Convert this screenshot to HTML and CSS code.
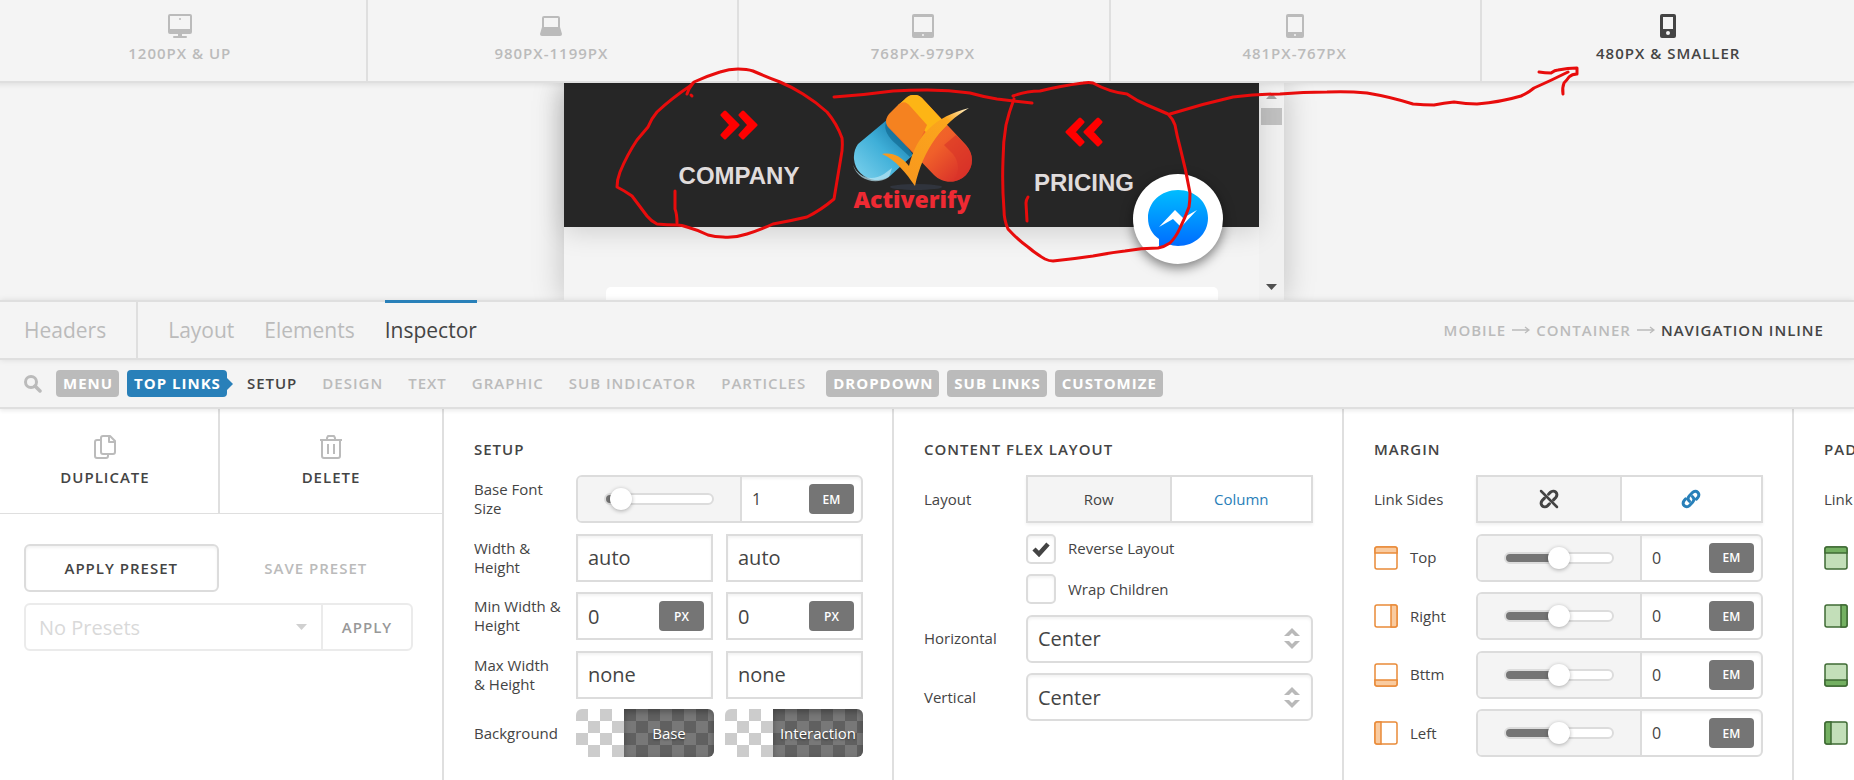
FILE: index.html
```html
<!DOCTYPE html>
<html lang="en">
<head>
    <meta charset="utf-8">
    <title>Design Editor - Navigation Inline</title>
    <link rel="stylesheet" href="styles.css">
</head>
<body>
    <!-- shared icons -->
    <svg class="defs" width="0" height="0" aria-hidden="true">
        <symbol id="side-top" viewBox="0 0 24 24">
            <rect class="box" x="1" y="1" width="22" height="22" rx="2"/>
            <path class="band" d="M1 7V3a2 2 0 0 1 2-2h18a2 2 0 0 1 2 2v4z"/>
        </symbol>
        <symbol id="side-right" viewBox="0 0 24 24">
            <rect class="box" x="1" y="1" width="22" height="22" rx="2"/>
            <path class="band" d="M17 1h4a2 2 0 0 1 2 2v18a2 2 0 0 1-2 2h-4z"/>
        </symbol>
        <symbol id="side-bottom" viewBox="0 0 24 24">
            <rect class="box" x="1" y="1" width="22" height="22" rx="2"/>
            <path class="band" d="M1 17v4a2 2 0 0 0 2 2h18a2 2 0 0 0 2-2v-4z"/>
        </symbol>
        <symbol id="side-left" viewBox="0 0 24 24">
            <rect class="box" x="1" y="1" width="22" height="22" rx="2"/>
            <path class="band" d="M7 1H3a2 2 0 0 0-2 2v18a2 2 0 0 0 2 2h4z"/>
        </symbol>
        <symbol id="arrow" viewBox="0 0 18 12">
            <path d="M0 6h17M13 3l4 3-4 3" fill="none" stroke="currentColor" stroke-width="1.3"/>
        </symbol>
        <symbol id="chevrons" viewBox="0 0 38 30">
            <path d="M5 2l13 13L5 28l-3-3 9-10L2 5zM23 2l13 13-13 13-3-3 9-10-9-10z" fill="currentColor" stroke="currentColor" stroke-width="3" stroke-linejoin="round"/>
        </symbol>
        <symbol id="link" viewBox="0 0 20 20">
            <g fill="none" stroke="currentColor" stroke-width="3" stroke-linecap="round">
                <path d="M8.5 12.3c-1.8-1.4-1.8-3.7-.3-5.3l3.3-3.5c1.5-1.5 3.8-1.6 5.3-.2s1.4 3.6 0 5.2l-1.5 1.6"/>
                <path d="M11.5 7.7c1.8 1.4 1.8 3.7.3 5.3l-3.3 3.5c-1.5 1.5-3.8 1.6-5.3.2s-1.4-3.6 0-5.2l1.5-1.6"/>
            </g>
        </symbol>
        <symbol id="unlink" viewBox="0 0 20 20">
            <g fill="none" stroke="currentColor" stroke-width="3" stroke-linecap="round">
                <path d="M9.5 5.2l1.8-1.8c1.6-1.5 4-1.6 5.5-.2s1.4 3.7 0 5.3l-2.3 2.4"/>
                <path d="M10.5 14.8l-1.8 1.8c-1.6 1.5-4 1.6-5.5.2s-1.4-3.7 0-5.3l2.3-2.4"/>
                <path d="M2 2l16 16" stroke-width="2.5"/>
            </g>
        </symbol>
    </svg>

    <nav class="devices">
        <button class="device">
            <svg width="24" height="24" viewBox="0 0 24 24"><path fill="currentColor" fill-rule="evenodd" d="M2 0h20a2 2 0 0 1 2 2v16a2 2 0 0 1-2 2h-8v2h4a1 1 0 0 1 0 2H6a1 1 0 0 1 0-2h4v-2H2a2 2 0 0 1-2-2V2a2 2 0 0 1 2-2zM2 2v13h20V2z"/><circle cx="12" cy="5" r="1" fill="currentColor"/></svg>
            1200PX &amp; UP
        </button>
        <button class="device">
            <svg width="24" height="24" viewBox="0 0 24 24"><path fill="currentColor" fill-rule="evenodd" d="M5 2h14a2 2 0 0 1 2 2v9l2 7a2 2 0 0 1-2 2H3a2 2 0 0 1-2-2l2-7V4a2 2 0 0 1 2-2zM5 4v9h14V4z"/></svg>
            980PX-1199PX
        </button>
        <button class="device">
            <svg width="24" height="24" viewBox="0 0 24 24"><path fill="currentColor" fill-rule="evenodd" d="M3 0h18a2 2 0 0 1 2 2v20a2 2 0 0 1-2 2H3a2 2 0 0 1-2-2V2a2 2 0 0 1 2-2zM3 3v15h18V3zM12 20a1 1 0 1 0 0 2 1 1 0 0 0 0-2z"/></svg>
            768PX-979PX
        </button>
        <button class="device">
            <svg width="24" height="24" viewBox="0 0 24 24"><path fill="currentColor" fill-rule="evenodd" d="M5 0h14a2 2 0 0 1 2 2v20a2 2 0 0 1-2 2H5a2 2 0 0 1-2-2V2a2 2 0 0 1 2-2zM5 3v15h14V3zM12 20a1 1 0 1 0 0 2 1 1 0 0 0 0-2z"/></svg>
            481PX-767PX
        </button>
        <button class="device active">
            <svg width="24" height="24" viewBox="0 0 24 24"><path fill="currentColor" fill-rule="evenodd" d="M6 0h12a2 2 0 0 1 2 2v20a2 2 0 0 1-2 2H6a2 2 0 0 1-2-2V2a2 2 0 0 1 2-2zM7 3v12h10V3zM12 17a2 2 0 1 0 0 4 2 2 0 0 0 0-4z"/></svg>
            480PX &amp; SMALLER
        </button>
    </nav>

    <main class="preview">
        <div class="phone">
            <div class="site">
                <header class="site-header">
                    <a href="#" class="site-link">
                        <svg width="38" height="30"><use href="#chevrons"/></svg>
                        COMPANY
                    </a>
                    <a href="#" class="logo">
                        <svg width="120" height="98" viewBox="0 0 120 98">
                            <defs>
                                <linearGradient id="blue" x1="0" y1="1" x2="1" y2="0"><stop offset="0" stop-color="#7fd3ee"/><stop offset=".5" stop-color="#3fafd8"/><stop offset="1" stop-color="#0a6a9c"/></linearGradient>
                                <linearGradient id="red" x1="0" y1="0" x2="1" y2="1"><stop offset="0" stop-color="#f58220"/><stop offset=".6" stop-color="#f0602a"/><stop offset="1" stop-color="#d2232a"/></linearGradient>
                                <linearGradient id="tick" x1="0" y1="1" x2="1" y2="0"><stop offset="0" stop-color="#f7941e"/><stop offset=".8" stop-color="#fba61c"/><stop offset="1" stop-color="#fff3d0"/></linearGradient>
                            </defs>
                            <ellipse cx="64" cy="92" rx="26" ry="3" fill="#30343d"/>
                            <path d="M36 24L6 49a23 23 0 0 0 32 32l23-21z" fill="url(#blue)"/>
                            <path d="M1 70c5 12 18 17 31 9l8-6-3 9c-13 9-32 3-36-12z" fill="#b9e6f4" opacity=".7"/>
                            <path d="M34 27c-3 8 3 16 10 22l14 13 4-5-28-30z" fill="#07597f" opacity=".5"/>
                            <path d="M54 3a11 11 0 0 1 16 0l44 47c8 9 8 21 0 30-9 9-23 9-32 0L36 32c-3-4-2-8 1-12z" fill="url(#red)"/>
                            <path d="M52 5c5-6 13-7 18-2l25 27-14 14L46 10z" fill="#fdb515"/>
                            <path d="M46 10c6-5 9-2 12 1l17 19-13 28-26-27c-3-4-2-8 1-12z" fill="#f58220"/>
                            <path d="M104 40l10 11c8 9 8 20 0 29-4 4-9 6-14 7 8-8 8-19 1-28L92 50z" fill="#d93328" opacity=".6"/>
                            <path d="M30 59c10-2 19 2 27 12 8-32 26-49 60-58-26 15-46 41-54 78-9-13-19-26-33-32z" fill="url(#tick)"/>
                        </svg>
                        <span class="logo-name">Activerify</span>
                    </a>
                    <a href="#" class="site-link low">
                        <svg class="flip" width="38" height="30"><use href="#chevrons"/></svg>
                        PRICING
                    </a>
                </header>
                <div class="site-card"></div>
                <button class="messenger" aria-label="Messenger">
                    <svg width="60" height="60" viewBox="0 0 60 60">
                        <defs><linearGradient id="msg" x1="0" y1="0" x2="0" y2="1"><stop offset="0" stop-color="#00bdff"/><stop offset="1" stop-color="#0068ff"/></linearGradient></defs>
                        <path fill="url(#msg)" d="M30 1C13 1 0 13 0 29c0 9 4 16 11 21v10l9-5c3 1 7 2 10 2 17 0 30-12 30-28S47 1 30 1z"/>
                        <path fill="#fff" d="M11 38l16-17 8 8 14-8-16 17-8-8z"/>
                    </svg>
                </button>
            </div>
            <div class="scrollbar">
                <svg width="11" height="6"><path d="M0 6l5.5-6L11 6z" fill="#a3a3a3"/></svg>
                <span class="thumb"></span>
                <svg class="down" width="11" height="6"><path d="M0 0h11L5.5 6z" fill="#505050"/></svg>
            </div>
        </div>
    </main>

    <nav class="tabs">
        <a href="#" class="tab-main">Headers</a>
        <a href="#">Layout</a>
        <a href="#">Elements</a>
        <a href="#" class="active">Inspector</a>
        <div class="crumbs">
            <a href="#">MOBILE</a>
            <svg width="18" height="12"><use href="#arrow"/></svg>
            <a href="#">CONTAINER</a>
            <svg width="18" height="12"><use href="#arrow"/></svg>
            <a href="#" class="active">NAVIGATION INLINE</a>
        </div>
    </nav>

    <nav class="subnav">
        <button class="search" aria-label="Search">
            <svg width="18" height="18" viewBox="0 0 18 18"><circle cx="7" cy="7" r="5.5" fill="none" stroke="currentColor" stroke-width="3"/><path d="M11 11l5 5" stroke="currentColor" stroke-width="3.5" stroke-linecap="round"/></svg>
        </button>
        <a href="#" class="pill">MENU</a>
        <a href="#" class="pill current">TOP LINKS</a>
        <div class="sections">
            <a href="#" class="active">SETUP</a>
            <a href="#">DESIGN</a>
            <a href="#">TEXT</a>
            <a href="#">GRAPHIC</a>
            <a href="#">SUB INDICATOR</a>
            <a href="#">PARTICLES</a>
        </div>
        <a href="#" class="pill">DROPDOWN</a>
        <a href="#" class="pill">SUB LINKS</a>
        <a href="#" class="pill">CUSTOMIZE</a>
    </nav>

    <div class="inspector">
        <aside class="side">
            <div class="actions">
                <button>
                    <svg width="22" height="24" viewBox="0 0 22 24" fill="none" stroke="currentColor" stroke-width="2" stroke-linejoin="round"><path d="M9 1h7l5 5v11a2 2 0 0 1-2 2H9a2 2 0 0 1-2-2V3a2 2 0 0 1 2-2zM15 1v6h6M7 5H3a2 2 0 0 0-2 2v14a2 2 0 0 0 2 2h9a2 2 0 0 0 2-2v-2"/></svg>
                    DUPLICATE
                </button>
                <button>
                    <svg width="22" height="24" viewBox="0 0 22 24" fill="none" stroke="currentColor" stroke-width="2" stroke-linejoin="round"><path d="M0 5h22M7 5V3l1-2h6l1 2v2M2 5v16a2 2 0 0 0 2 2h14a2 2 0 0 0 2-2V5M8 9v10M14 9v10"/></svg>
                    DELETE
                </button>
            </div>
            <div class="presets">
                <div class="preset-tabs">
                    <button class="active">APPLY PRESET</button>
                    <button>SAVE PRESET</button>
                </div>
                <div class="preset-form">
                    <select aria-label="Preset" disabled>
                        <option>No Presets</option>
                    </select>
                    <svg width="11" height="6"><path d="M0 0h11L5.5 6z" fill="#aaa"/></svg>
                    <button disabled>APPLY</button>
                </div>
            </div>
        </aside>

        <section class="column">
            <h2>SETUP</h2>
            <div class="rows five">
                <div class="row">
                    <label for="fontSize">Base Font Size</label>
                    <div class="slider">
                        <div class="range"><input type="range" id="fontSize" min="0" max="100" value="5" style="--fill: 12%"></div>
                        <input type="text" value="1" aria-label="Base font size value">
                        <button class="unit">EM</button>
                    </div>
                </div>
                <div class="row">
                    <label for="width">Width &amp; Height</label>
                    <div class="pair">
                        <div class="field"><input type="text" id="width" value="auto"></div>
                        <div class="field"><input type="text" value="auto" aria-label="Height"></div>
                    </div>
                </div>
                <div class="row">
                    <label for="minWidth">Min Width &amp; Height</label>
                    <div class="pair">
                        <div class="field"><input type="text" id="minWidth" value="0"><button class="unit">PX</button></div>
                        <div class="field"><input type="text" value="0" aria-label="Min height"><button class="unit">PX</button></div>
                    </div>
                </div>
                <div class="row">
                    <label for="maxWidth">Max Width &amp; Height</label>
                    <div class="pair">
                        <div class="field"><input type="text" id="maxWidth" value="none"></div>
                        <div class="field"><input type="text" value="none" aria-label="Max height"></div>
                    </div>
                </div>
                <div class="row">
                    <span class="label">Background</span>
                    <div class="pair swatches">
                        <button class="swatch"><span>Base</span></button>
                        <button class="swatch"><span>Interaction</span></button>
                    </div>
                </div>
            </div>
        </section>

        <section class="column">
            <h2>CONTENT FLEX LAYOUT</h2>
            <div class="rows flex-layout">
                <div class="row">
                    <span class="label">Layout</span>
                    <div class="toggle">
                        <button>Row</button>
                        <button class="active">Column</button>
                    </div>
                </div>
                <div class="row check">
                    <input type="checkbox" id="reverse" checked>
                    <label for="reverse">Reverse Layout</label>
                </div>
                <div class="row check">
                    <input type="checkbox" id="wrap">
                    <label for="wrap">Wrap Children</label>
                </div>
                <div class="row">
                    <label for="horizontal">Horizontal</label>
                    <div class="select">
                        <select id="horizontal"><option>Center</option></select>
                        <svg width="16" height="21"><path d="M0 8l8-8 8 8h-5L8 5 5 8zM0 13h5l3 3 3-3h5l-8 8z" fill="#b9b9b9"/></svg>
                    </div>
                </div>
                <div class="row">
                    <label for="vertical">Vertical</label>
                    <div class="select">
                        <select id="vertical"><option>Center</option></select>
                        <svg width="16" height="21"><path d="M0 8l8-8 8 8h-5L8 5 5 8zM0 13h5l3 3 3-3h5l-8 8z" fill="#b9b9b9"/></svg>
                    </div>
                </div>
            </div>
        </section>

        <section class="column margin">
            <h2>MARGIN</h2>
            <div class="rows five">
                <div class="row">
                    <span class="label">Link Sides</span>
                    <div class="toggle">
                        <button aria-label="Unlink"><svg width="20" height="20"><use href="#unlink"/></svg></button>
                        <button class="active" aria-label="Link"><svg width="20" height="20"><use href="#link"/></svg></button>
                    </div>
                </div>
                <div class="row">
                    <label for="mTop"><svg width="24" height="24"><use href="#side-top"/></svg>Top</label>
                    <div class="slider">
                        <div class="range"><input type="range" id="mTop" min="-50" max="50" value="0" style="--fill: 50%"></div>
                        <input type="text" value="0" aria-label="Top value">
                        <button class="unit">EM</button>
                    </div>
                </div>
                <div class="row">
                    <label for="mRight"><svg width="24" height="24"><use href="#side-right"/></svg>Right</label>
                    <div class="slider">
                        <div class="range"><input type="range" id="mRight" min="-50" max="50" value="0" style="--fill: 50%"></div>
                        <input type="text" value="0" aria-label="Right value">
                        <button class="unit">EM</button>
                    </div>
                </div>
                <div class="row">
                    <label for="mBottom"><svg width="24" height="24"><use href="#side-bottom"/></svg>Bttm</label>
                    <div class="slider">
                        <div class="range"><input type="range" id="mBottom" min="-50" max="50" value="0" style="--fill: 50%"></div>
                        <input type="text" value="0" aria-label="Bottom value">
                        <button class="unit">EM</button>
                    </div>
                </div>
                <div class="row">
                    <label for="mLeft"><svg width="24" height="24"><use href="#side-left"/></svg>Left</label>
                    <div class="slider">
                        <div class="range"><input type="range" id="mLeft" min="-50" max="50" value="0" style="--fill: 50%"></div>
                        <input type="text" value="0" aria-label="Left value">
                        <button class="unit">EM</button>
                    </div>
                </div>
            </div>
        </section>

        <section class="column padding">
            <h2>PADDING</h2>
            <div class="rows five">
                <div class="row"><span class="label">Link Sides</span></div>
                <div class="row"><span class="label"><svg width="24" height="24"><use href="#side-top"/></svg></span></div>
                <div class="row"><span class="label"><svg width="24" height="24"><use href="#side-right"/></svg></span></div>
                <div class="row"><span class="label"><svg width="24" height="24"><use href="#side-bottom"/></svg></span></div>
                <div class="row"><span class="label"><svg width="24" height="24"><use href="#side-left"/></svg></span></div>
            </div>
        </section>
    </div>

    <!-- hand drawn notes -->
    <svg class="notes" width="1854" height="300" viewBox="0 0 1854 300" aria-hidden="true">
        <path d="M687 94l2-5 5-7q13-6 26-10 9-3 18-3 9 0 15 2 14 6 27 11 12 5 23 12 13 8 24 18 10 12 15 26 1 10-1 19l-7 42q-13 11-27 18-17 4-34 7-13 6-26 10-12 4-24 3-8 0-15-2-10-5-21-8-5-2-10-2-10 0-20-1-6-3-10-8l-15-20q-7-5-15-9 0-7 3-15 7-17 17-32l11-13q3-8 9-15 15-14 33-26l4-4"/>
        <path d="M675 191v18q2 5 2 14M691 95l1 1"/>
        <path d="M834 97q30-2 59-6 17-1 34-1 22 0 43 3 14 4 27 6l35 4"/>
        <path d="M1013 96q13-5 27-5 20-5 43-8 6-1 10 0 16 9 34 11 10 7 20 11l21 9q5 5 7 11 2 11 5 22 6 23 10 46 0 8-1 14-4 11-9 21-4 9-10 15-6 4-12 5-17 0-33 3-16 2-32 5-20 3-40 5-4 0-8-2-9-5-17-12-11-8-20-18-4-9-4-19-2-25-1-50 0-18 3-35 3-13 8-26"/>
        <path d="M1028 197q-2 3-2 6l1 18"/>
        <path d="M1170 114q32-10 63-17 23-3 47-3 23-2 47-2 20-1 40 1 24 4 46 11 11 1 21 1 10-2 20-3 12 2 23 2 24-2 44-8 7-3 13-8 16-7 34-16"/>
        <path d="M1539 72q6 1 12 1 4-3 7-3 10-2 19-2v6q-5 0-8 3-2 3-5 6-2 5-1 11"/>
    </svg>
</body>
</html>
```
FILE: styles.css
```css
* {
    box-sizing: border-box;
}
body {
    margin: 0;
    min-height: 100vh;
    display: flex;
    flex-direction: column;
    position: relative;
    overflow-x: hidden;
    font-family: "Open Sans", sans-serif;
    font-size: 15px;
    color: #444;
    background: #fff;
}
a {
    color: inherit;
    text-decoration: none;
}
button, input, select {
    font-family: inherit;
    color: inherit;
    margin: 0;
}
button {
    border: 0;
    padding: 0;
    background: none;
    cursor: pointer;
}
.defs {
    position: absolute;
}

/* device bar */
.devices {
    display: grid;
    grid-template-columns: repeat(5, 1fr);
    margin-left: -4px;
    height: 83px;
    background: #f4f4f4;
    border-bottom: 2px solid #dfdfdf;
    box-shadow: 0 2px 5px rgba(0, 0, 0, 0.08);
    position: relative;
    z-index: 1;
}
.device {
    display: flex;
    flex-direction: column;
    align-items: center;
    gap: 5px;
    padding: 14px 2px 0 0;
    border-right: 2px solid #dfdfdf;
    font-size: 15px;
    line-height: 20px;
    font-weight: 600;
    letter-spacing: 1px;
    color: #bbb;
}
.device:last-child {
    border-right: 0;
    padding-right: 0;
}
.device.active {
    color: #444;
}

/* site preview */
.preview {
    display: flex;
    justify-content: center;
    height: 217px;
    padding-right: 6px;
    background: #f4f4f4;
    overflow: hidden;
}
.phone {
    display: flex;
    width: 720px;
    box-shadow: 0 0 30px rgba(0, 0, 0, 0.22);
}
.site {
    flex: 1;
    position: relative;
    background: #f4f4f4;
}
.site-header {
    display: flex;
    height: 144px;
    padding: 12px 0 0 115px;
    background: #262626;
    box-shadow: 0 5px 25px rgba(0, 0, 0, 0.15);
}
.site-link {
    display: flex;
    flex-direction: column;
    align-items: center;
    gap: 22px;
    width: 120px;
    padding-top: 15px;
    font: bold 24px/28px "Liberation Sans", Arial, sans-serif;
    color: #e0dcdc;
}
.site-link.low {
    padding-top: 22px;
}
.site-link svg {
    color: #f00;
}
.flip {
    transform: scaleX(-1);
}
.logo {
    display: flex;
    flex-direction: column;
    align-items: center;
    width: 120px;
    margin: 0 52px 0 53px;
}
.logo-name {
    font-size: 23px;
    line-height: 12px;
    font-weight: 800;
    color: #ee2a33;
}
.site-card {
    height: 40px;
    margin: 60px 41px 0 42px;
    border-radius: 5px;
    background: #fff;
}
.messenger {
    position: absolute;
    top: 91px;
    right: 36px;
    width: 90px;
    height: 90px;
    border-radius: 50%;
    background: #fff;
    box-shadow: 0 4px 12px rgba(0, 0, 0, 0.5);
    display: flex;
    align-items: center;
    justify-content: center;
}
.scrollbar {
    display: flex;
    flex-direction: column;
    align-items: center;
    gap: 9px;
    width: 25px;
    padding: 10px 0;
    background: #f1f1f1;
}
.thumb {
    width: 21px;
    height: 17px;
    background: #c1c1c1;
}
.down {
    margin-top: auto;
}

/* tabs */
.tabs {
    display: flex;
    gap: 30px;
    height: 60px;
    padding: 0 30px 0 24px;
    background: #f4f4f4;
    border-top: 2px solid #dfdfdf;
    border-bottom: 2px solid #dfdfdf;
    box-shadow: 0 0 6px rgba(0, 0, 0, 0.1);
    position: relative;
    z-index: 1;
    font-size: 21px;
    line-height: 56px;
    color: #bbb;
}
.tab-main {
    padding-right: 30px;
    border-right: 2px solid #dfdfdf;
}
.active {
    color: #444;
}
.tabs > .active {
    margin-top: -2px;
    line-height: 54px;
    border-top: 3px solid #2980b9;
}
.crumbs {
    display: flex;
    align-items: center;
    gap: 6px;
    margin-left: auto;
    font-size: 15px;
    font-weight: 600;
    letter-spacing: 1px;
}

/* sub navigation */
.subnav {
    display: flex;
    align-items: center;
    gap: 8px;
    height: 49px;
    padding: 0 24px;
    background: #f4f4f4;
    border-bottom: 2px solid #dfdfdf;
    box-shadow: 0 2px 4px rgba(0, 0, 0, 0.08);
    position: relative;
    font-size: 15px;
    line-height: 27px;
    font-weight: 600;
    letter-spacing: 1px;
    color: #bbb;
    white-space: nowrap;
}
.search {
    width: 24px;
    height: 18px;
    color: inherit;
    text-align: left;
}
.search svg {
    display: block;
}
.pill {
    padding: 0 6px 0 7px;
    border-radius: 4px;
    background: #bbb;
    color: #fff;
    font-weight: 700;
}
.pill.current {
    position: relative;
    background: #2980b9;
}
.pill.current::after {
    content: "";
    position: absolute;
    left: 100%;
    top: 8px;
    border: solid transparent;
    border-width: 6px 0 6px 6px;
    border-left-color: #2980b9;
}
.sections {
    display: flex;
    gap: 25px;
    padding: 0 12px;
}

/* inspector */
.inspector {
    display: flex;
    flex: 1;
    overflow: hidden;
}
.side {
    flex: 0 0 444px;
    min-width: 0;
    border-right: 2px solid #dfdfdf;
}
.actions {
    display: grid;
    grid-template-columns: 228px 1fr;
    margin-left: -8px;
    height: 105px;
    border-bottom: 1px solid #dfdfdf;
}
.actions button {
    display: flex;
    flex-direction: column;
    align-items: center;
    gap: 8px;
    padding-top: 26px;
    font-size: 15px;
    line-height: 20px;
    font-weight: 600;
    letter-spacing: 1px;
}
.actions button:first-child {
    border-right: 2px solid #dfdfdf;
}
.actions svg {
    color: #bbb;
}
.presets {
    padding: 30px 29px 0 24px;
}
.preset-tabs {
    display: grid;
    grid-template-columns: 1fr 1fr;
}
.preset-tabs button {
    height: 48px;
    font-size: 15px;
    font-weight: 600;
    letter-spacing: 1px;
    color: #bbb;
}
.preset-tabs .active {
    border: 2px solid #dcdcdc;
    border-radius: 6px;
    box-shadow: inset 0 2px 3px rgba(0, 0, 0, 0.05);
    color: #444;
}
.preset-form {
    display: flex;
    align-items: center;
    height: 48px;
    margin-top: 11px;
    border: 2px solid #dcdcdc;
    border-radius: 6px;
    opacity: 0.55;
}
.preset-form select {
    flex: 1;
    height: 100%;
    padding: 0 13px;
    border: 0;
    background: none;
    appearance: none;
    font-size: 20px;
    color: #bbb;
    opacity: 1;
}
.preset-form svg {
    margin-right: 14px;
}
.preset-form button {
    width: 90px;
    height: 100%;
    border-left: 2px solid #dcdcdc;
    font-size: 15px;
    font-weight: 600;
    letter-spacing: 1px;
    color: #444;
}
.column {
    flex: 0 0 450px;
    min-width: 0;
    padding: 30px 29px 20px 30px;
    border-right: 2px solid #dfdfdf;
}
h2 {
    margin: 0 0 16px;
    font-size: 15px;
    line-height: 20px;
    font-weight: 600;
    letter-spacing: 1px;
}
.rows {
    display: flex;
    flex-direction: column;
    justify-content: space-between;
}
.five {
    height: 282px;
}
.flex-layout {
    height: 246px;
}
.row {
    display: grid;
    grid-template-columns: 88px minmax(0, 1fr);
    column-gap: 14px;
    align-items: center;
    min-height: 48px;
    font-size: 15px;
}
.row label, .label {
    display: flex;
    align-items: center;
    gap: 12px;
    line-height: 19px;
}
.slider, .field, .select {
    display: flex;
    align-items: center;
    height: 48px;
    border: 2px solid #dcdcdc;
    background: #fff;
    box-shadow: inset 0 2px 3px rgba(0, 0, 0, 0.05);
}
.slider, .select {
    border-radius: 6px;
}
.range {
    display: flex;
    align-items: center;
    justify-content: center;
    width: 164px;
    height: 100%;
    background: #f4f4f4;
    border-right: 2px solid #dcdcdc;
    border-radius: 4px 0 0 4px;
}
input[type=range] {
    appearance: none;
    width: 110px;
    height: 22px;
    background: none;
}
input[type=range]::-webkit-slider-runnable-track {
    height: 12px;
    border: 2px solid #dcdcdc;
    border-radius: 6px;
    background: linear-gradient(to right, #757575 var(--fill), #fff var(--fill));
}
input[type=range]::-webkit-slider-thumb {
    appearance: none;
    width: 22px;
    height: 22px;
    margin-top: -7px;
    border-radius: 50%;
    background: #fff;
    box-shadow: 0 1px 4px rgba(0, 0, 0, 0.3);
}
input[type=text] {
    flex: 1;
    min-width: 0;
    height: 100%;
    padding: 0 10px;
    border: 0;
    background: none;
    font-size: 20px;
}
.slider input[type=text] {
    font-size: 16px;
}
.unit {
    width: 45px;
    height: 30px;
    margin-right: 7px;
    border-radius: 4px;
    background: #757575;
    color: #fff;
    font-size: 12px;
    font-weight: 600;
}
.pair {
    display: grid;
    grid-template-columns: repeat(2, minmax(0, 1fr));
    gap: 13px;
}
.swatches {
    gap: 11px;
}
.swatch {
    height: 48px;
    padding-left: 48px;
    border-radius: 6px;
    overflow: hidden;
    background: repeating-conic-gradient(#fff 0 25%, #ccc 0 50%) 0 0 / 24px 24px;
    color: #fff;
    font-size: 15px;
    text-shadow: 0 1px 2px rgba(0, 0, 0, 0.5);
}
.swatch span {
    display: block;
    line-height: 48px;
    background: rgba(0, 0, 0, 0.53);
    box-shadow: inset 0 3px 6px rgba(0, 0, 0, 0.3);
}
.toggle {
    display: grid;
    grid-template-columns: 1fr 1fr;
    height: 48px;
    border: 2px solid #dcdcdc;
    box-shadow: 0 2px 3px rgba(0, 0, 0, 0.06);
}
.toggle button {
    display: flex;
    align-items: center;
    justify-content: center;
    font-size: 15px;
    background: #f4f4f4;
}
.toggle .active {
    border-left: 2px solid #dcdcdc;
    background: #fff;
    color: #2980b9;
}
.row.check {
    display: flex;
    gap: 12px;
    min-height: 30px;
    padding-left: 102px;
}
input[type=checkbox] {
    appearance: none;
    width: 30px;
    height: 30px;
    border: 2px solid #dcdcdc;
    border-radius: 5px;
    box-shadow: inset 0 2px 3px rgba(0, 0, 0, 0.05);
}
input[type=checkbox]:checked {
    background: url("data:image/svg+xml,%3Csvg xmlns='http://www.w3.org/2000/svg' width='18' height='16'%3E%3Cpath d='M2 8l5 5 9-10' fill='none' stroke='%23444' stroke-width='4.5'/%3E%3C/svg%3E") center no-repeat;
}
.select select {
    flex: 1;
    height: 100%;
    padding: 0 10px;
    border: 0;
    background: none;
    appearance: none;
    font-size: 20px;
}
.select svg {
    margin-right: 11px;
}
.margin label svg {
    --line: #e98b39;
    --band: #f9cba0;
    --box: #fff;
}
.padding .label {
    white-space: nowrap;
}
.padding .label svg {
    --line: #3f6b34;
    --band: #74b062;
    --box: #c3dfb9;
}
.box {
    fill: var(--box);
    stroke: var(--line);
    stroke-width: 1.5;
}
.band {
    fill: var(--band);
    stroke: var(--line);
    stroke-width: 1.5;
}

.notes {
    position: absolute;
    top: 0;
    left: 0;
    z-index: 2;
    pointer-events: none;
    fill: none;
    stroke: #e80c0c;
    stroke-width: 3;
    stroke-linecap: round;
    stroke-linejoin: round;
}
```
